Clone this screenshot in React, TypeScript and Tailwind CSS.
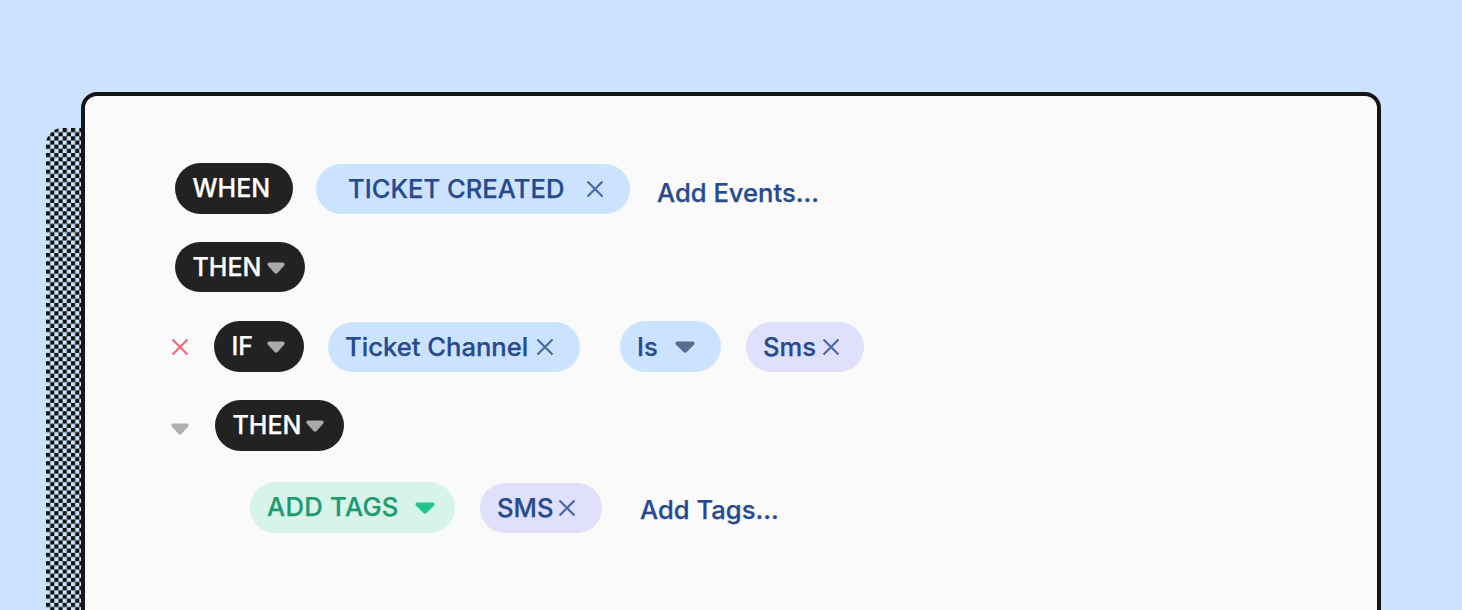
const Caret = ({ className }: { className: string }) => (
  <svg viewBox="0 0 18 11" className={`h-[12px] shrink-0 ${className}`} fill="currentColor" preserveAspectRatio="none">
    <path d="M2 0.5h14c1.4 0 2.1 1.6 1.2 2.6l-6.6 7c-.8.8-2.2.8-3 0L.8 3.1C-.1 2.1.6.5 2 .5z" />
  </svg>
);

const Cross = ({ className }: { className: string }) => (
  <svg viewBox="0 0 18 18" className={`h-[18px] w-[18px] shrink-0 ${className}`} fill="none" stroke="currentColor" strokeWidth="2.2">
    <path d="M1.5 1.5l15 15M16.5 1.5l-15 15" />
  </svg>
);

const Dark = ({ children, className = "" }: { children: React.ReactNode; className?: string }) => (
  <div className={`flex items-center rounded-full bg-[#222222] pl-[17.5px] pt-[1px] text-[25px] font-medium text-white [-webkit-text-stroke:0.25px_#ffffff] ${className}`}>
    {children}
  </div>
);

const Pill = ({ children, className = "" }: { children: React.ReactNode; className?: string }) => (
  <div className={`flex items-center rounded-full pt-[1px] text-[25.6px] font-medium [-webkit-text-stroke:0.25px_currentColor] ${className}`}>
    {children}
  </div>
);

export default function App() {
  return (
    <div className="h-[610px] overflow-hidden bg-[#cce3ff] px-[81px] pt-[92px] font-['Inter',sans-serif] antialiased">
      <div className="relative h-[600px] w-[1300px]">
        {/* checker shadow */}
        <svg className="absolute left-[-35px] top-[36px]" width="1300" height="600">
          <defs>
            <pattern id="checker" width="8.33" height="8.33" patternUnits="userSpaceOnUse">
              <rect width="4.165" height="4.165" fill="#111111" />
              <rect x="4.165" y="4.165" width="4.165" height="4.165" fill="#111111" />
            </pattern>
          </defs>
          <rect width="1300" height="600" rx="16" fill="url(#checker)" />
        </svg>
        <div className="relative flex h-full flex-col rounded-[16px] border-4 border-[#161616] bg-[#fafafa] pl-[90px] pt-[67px]">
          <div className="flex items-center">
            <Dark className="h-[51px] w-[118px]">WHEN</Dark>
            <Pill className="ml-[23px] h-[50px] w-[314px] bg-[#cce3ff] pl-[32px] text-[#274a8f]">
              TICKET CREATED
              <Cross className="ml-[22px] text-[#4a6aa5]" />
            </Pill>
            <span className="ml-[27px] mt-[10px] text-[25.6px] font-medium text-[#274a8f] [-webkit-text-stroke:0.25px_#274a8f]">Add Events...</span>
          </div>
          <div className="mt-[28px] flex">
            <Dark className="h-[50px] w-[130px]">
              THEN
              <Caret className="ml-[5.5px] w-[18px] text-[#aaaaaa]" />
            </Dark>
          </div>
          <div className="ml-[-4px] mt-[29px] flex items-center">
            <Cross className="text-[#ee6b7d]" />
            <Dark className="ml-[25px] h-[51px] w-[90px]">
              IF
              <Caret className="ml-[14px] w-[18px] text-[#aaaaaa]" />
            </Dark>
            <Pill className="ml-[24px] h-[50px] w-[252px] bg-[#cce3ff] pl-[17px] text-[#274a8f]">
              Ticket Channel
              <Cross className="ml-[8px] text-[#4a6aa5]" />
            </Pill>
            <Pill className="ml-[40px] h-[51px] w-[101px] bg-[#cce3ff] pl-[17px] text-[#274a8f]">
              Is
              <Caret className="ml-[17px] w-[20px] text-[#566b8f]" />
            </Pill>
            <Pill className="ml-[25px] h-[50px] w-[118px] bg-[#e0dffc] pl-[17px] text-[#274a8f]">
              Sms
              <Cross className="ml-[6px] text-[#4a6aa5]" />
            </Pill>
          </div>
          <div className="ml-[-4px] mt-[28px] flex items-center">
            <Caret className="mt-[6px] w-[18px] text-[#b0b0b0]" />
            <Dark className="ml-[26px] h-[51px] w-[129px]">
              THEN
              <Caret className="ml-[5px] w-[18px] text-[#aaaaaa]" />
            </Dark>
          </div>
          <div className="ml-[75px] mt-[31px] flex items-center">
            <Pill className="h-[51px] w-[205px] bg-[#d6f4e9] pb-[1px] pl-[17px] pt-0 text-[#1f9a70] tracking-[0.3px]">
              ADD TAGS
              <Caret className="ml-[16px] w-[20px] text-[#20c48c]" />
            </Pill>
            <Pill className="ml-[25px] h-[50px] w-[122px] bg-[#e0dffc] pl-[17px] text-[#274a8f]">
              SMS
              <Cross className="ml-[5px] text-[#4a6aa5]" />
            </Pill>
            <span className="ml-[38px] mt-[6px] text-[25.6px] font-medium text-[#274a8f] [-webkit-text-stroke:0.25px_#274a8f]">Add Tags...</span>
          </div>
        </div>
      </div>
    </div>
  );
}
